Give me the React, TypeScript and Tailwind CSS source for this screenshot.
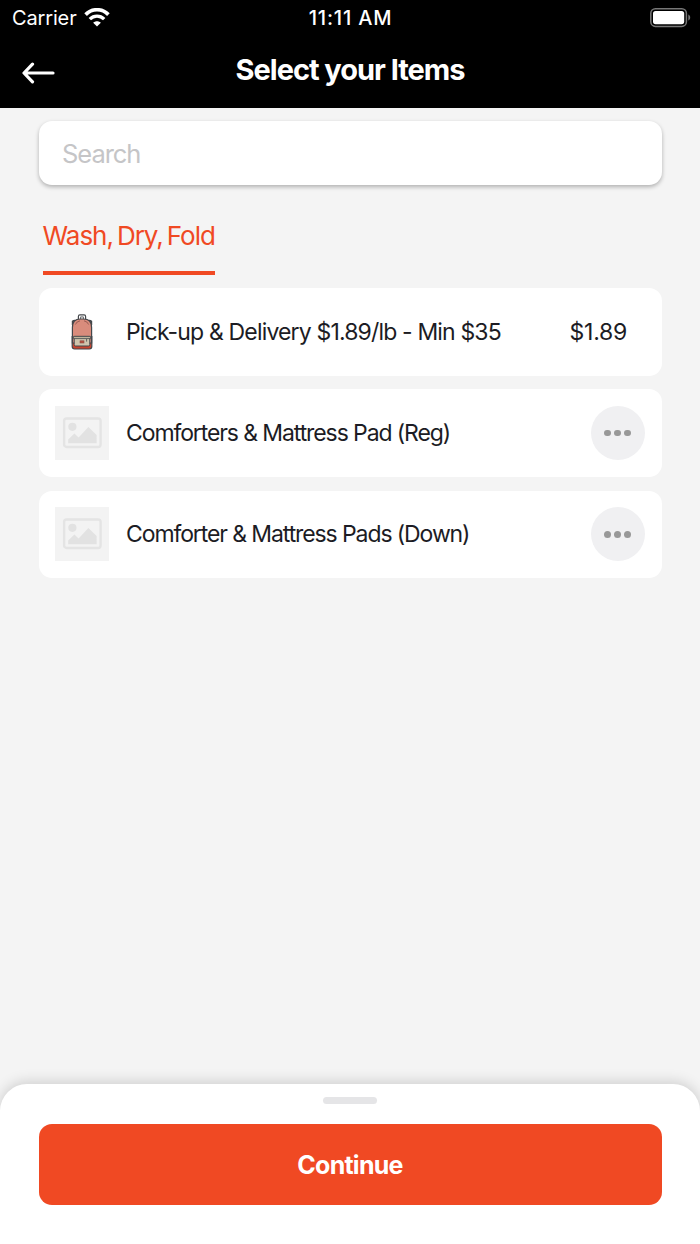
type Item = {
  name: string;
  price?: string;
};

const items: Item[] = [
  { name: "Pick-up & Delivery $1.89/lb - Min $35", price: "$1.89" },
  { name: "Comforters & Mattress Pad (Reg)" },
  { name: "Comforter & Mattress Pads (Down)" },
];

function WifiIcon() {
  return (
    <svg width="26" height="20" viewBox="0 0 26 20" fill="none" stroke="#fff">
      <path d="M1.6 6.6C8 0.1 18 0.1 24.4 6.6" strokeWidth="3.7" />
      <path d="M5.8 11.1C9.9 7.1 16.1 7.1 20.2 11.1" strokeWidth="3.4" />
      <path d="M13 18.6L9.2 14.8C11.3 12.8 14.7 12.8 16.8 14.8Z" fill="#fff" stroke="none" />
    </svg>
  );
}

function BatteryIcon() {
  return (
    <svg width="42" height="20" viewBox="0 0 42 20" fill="none">
      <rect x="0.8" y="0.8" width="35.6" height="17.6" rx="4.6" stroke="#777" strokeWidth="1.5" />
      <rect x="3" y="3" width="31.2" height="13.2" rx="2.6" fill="#fff" />
      <path d="M38.3 6.6C40.8 7.6 40.8 11.6 38.3 12.6Z" fill="#777" />
    </svg>
  );
}

function BackArrow() {
  return (
    <svg width="34" height="22" viewBox="0 0 34 22" fill="none" stroke="#fff" strokeWidth="3.2" strokeLinecap="round" strokeLinejoin="round">
      <path d="M10.5 2.2L2 11L10.5 19.8M2.4 11H31" />
    </svg>
  );
}

function BackpackIcon() {
  return (
    <svg width="22" height="36" viewBox="0 0 22 36" fill="none" stroke="#44474b" strokeWidth="1.2">
      <path d="M7.4 5.4V2.4Q7.4 0.9 8.9 0.9H13.1Q14.6 0.9 14.6 2.4V5.4" />
      <path d="M9.6 5V2.9H12.4V5" strokeWidth="0.8" />
      <path d="M1.4 11V7.2Q3 5.8 5.4 6.6M20.6 11V7.2Q19 5.8 16.6 6.6" fill="#55585b" />
      <path d="M1.2 22.5V32.6Q1.2 35 3.6 35H18.4Q20.8 35 20.8 32.6V22.5Z" fill="#c8452f" />
      <path d="M1.4 29V13.6Q1.4 5 9.4 5H12.6Q20.6 5 20.6 13.6V29Z" fill="#d98c7c" />
      <path d="M4.4 10.5Q5.6 7.4 9 6.8M17.6 10.5Q16.4 7.4 13 6.8" stroke="#8a5148" strokeWidth="0.8" />
      <path d="M3.2 22.4H18.8V30.6Q18.8 32 17.4 32H4.6Q3.2 32 3.2 30.6Z" fill="#cfc5ad" strokeWidth="1" />
      <path d="M2.4 22.4H19.6V24.6H2.4Z" fill="#c0b59d" strokeWidth="0.8" />
      <path d="M15.6 25V27.6" strokeWidth="0.8" />
      <rect x="9" y="26.8" width="4" height="2.2" fill="#b6503e" stroke="#8a5148" strokeWidth="0.6" />
    </svg>
  );
}

function PlaceholderIcon() {
  return (
    <svg width="40" height="32" viewBox="0 0 40 32" fill="none">
      <rect x="2.1" y="1.5" width="36.5" height="28.5" rx="2.5" stroke="#e4e4e4" strokeWidth="2.4" />
      <circle cx="10.4" cy="9.8" r="4.1" fill="#e2e2e2" />
      <path d="M6.2 26.2V22.5L12.4 16.4L16.6 20.4L26.4 10L34.6 18V26.2Z" fill="#e2e2e2" />
    </svg>
  );
}

function DotsButton() {
  return (
    <button className="flex size-[54px] items-center justify-center gap-[3.4px] rounded-full bg-[#f0f0f2]">
      <span className="size-[6.8px] rounded-full bg-[#989898]" />
      <span className="size-[6.8px] rounded-full bg-[#989898]" />
      <span className="size-[6.8px] rounded-full bg-[#989898]" />
    </button>
  );
}

function ItemRow({ item }: { item: Item }) {
  return (
    <li className="flex h-[87.5px] items-center rounded-[13px] bg-white pr-[17px] pl-[16.5px]">
      {item.price ? (
        <div className="flex size-[54px] items-center justify-center">
          <BackpackIcon />
        </div>
      ) : (
        <div className="flex size-[54px] items-center justify-center bg-[#f3f3f3]">
          <PlaceholderIcon />
        </div>
      )}
      <span
        className={`ml-[17px] flex-1 pt-[0.8px] text-[23px] whitespace-nowrap text-[#1c1c24] ${item.price ? "tracking-[-0.84px]" : "tracking-[-1.1px]"}`}
      >
        {item.name}
      </span>
      {item.price ? (
        <span className="pr-[17.5px] text-[23px] tracking-[-0.25px] text-[#1c1c24]">{item.price}</span>
      ) : (
        <DotsButton />
      )}
    </li>
  );
}

export default function App() {
  return (
    <div className="flex h-[1244px] w-[700px] flex-col overflow-hidden bg-[#f4f4f4] font-['Inter',sans-serif]">
      <header className="h-[107.5px] bg-black text-white">
        <div className="grid h-9 grid-cols-3 items-center pr-2 pl-3">
          <div className="flex items-center gap-[7px] text-[20px]">
            <span className="tracking-[-0.15px]">Carrier</span>
            <WifiIcon />
          </div>
          <span className="-ml-[3px] text-center text-[20px] font-medium tracking-[0.8px]">11:11 AM</span>
          <div className="flex justify-end">
            <BatteryIcon />
          </div>
        </div>
        <div className="grid h-[67px] grid-cols-[60px_1fr_60px] items-center">
          <button className="mt-[6px] ml-[22px]">
            <BackArrow />
          </button>
          <h1 className="text-center text-[29px] font-bold tracking-[-1.03px]">Select your Items</h1>
        </div>
      </header>

      <main className="flex-1 px-[38.5px] pt-[13.5px]">
        <input
          className="block h-16 w-full rounded-[13px] bg-white px-[23.5px] text-[25.5px] tracking-[-1.05px] shadow-[0_2px_4px_rgba(0,0,0,0.28)] outline-none placeholder:text-[#c5c5c7]"
          placeholder="Search"
        />
        <nav className="mt-[31px] flex pl-1">
          <button className="flex h-[58.5px] w-[172.5px] flex-col justify-between text-left text-[26px] tracking-[-1px] whitespace-nowrap text-[#f04923] [word-spacing:-2.4px]">
            <span>Wash, Dry, Fold</span>
            <span className="h-[3.5px] w-full bg-[#f04923]" />
          </button>
        </nav>
        <ul className="mt-[13.5px] flex flex-col gap-[13.75px]">
          {items.map((item) => (
            <ItemRow key={item.name} item={item} />
          ))}
        </ul>
      </main>

      <footer className="h-40 rounded-t-[27px] bg-white px-[38.5px] pt-[13px] shadow-[0_-2px_14px_rgba(0,0,0,0.16)]">
        <div className="mx-auto h-[7px] w-[54px] rounded-full bg-[#e5e5e7]" />
        <button className="mt-5 h-[81px] w-full rounded-[13px] bg-[#f04923] pt-[3px] text-[25px] font-bold tracking-[-0.75px] text-white">
          Continue
        </button>
      </footer>
    </div>
  );
}
